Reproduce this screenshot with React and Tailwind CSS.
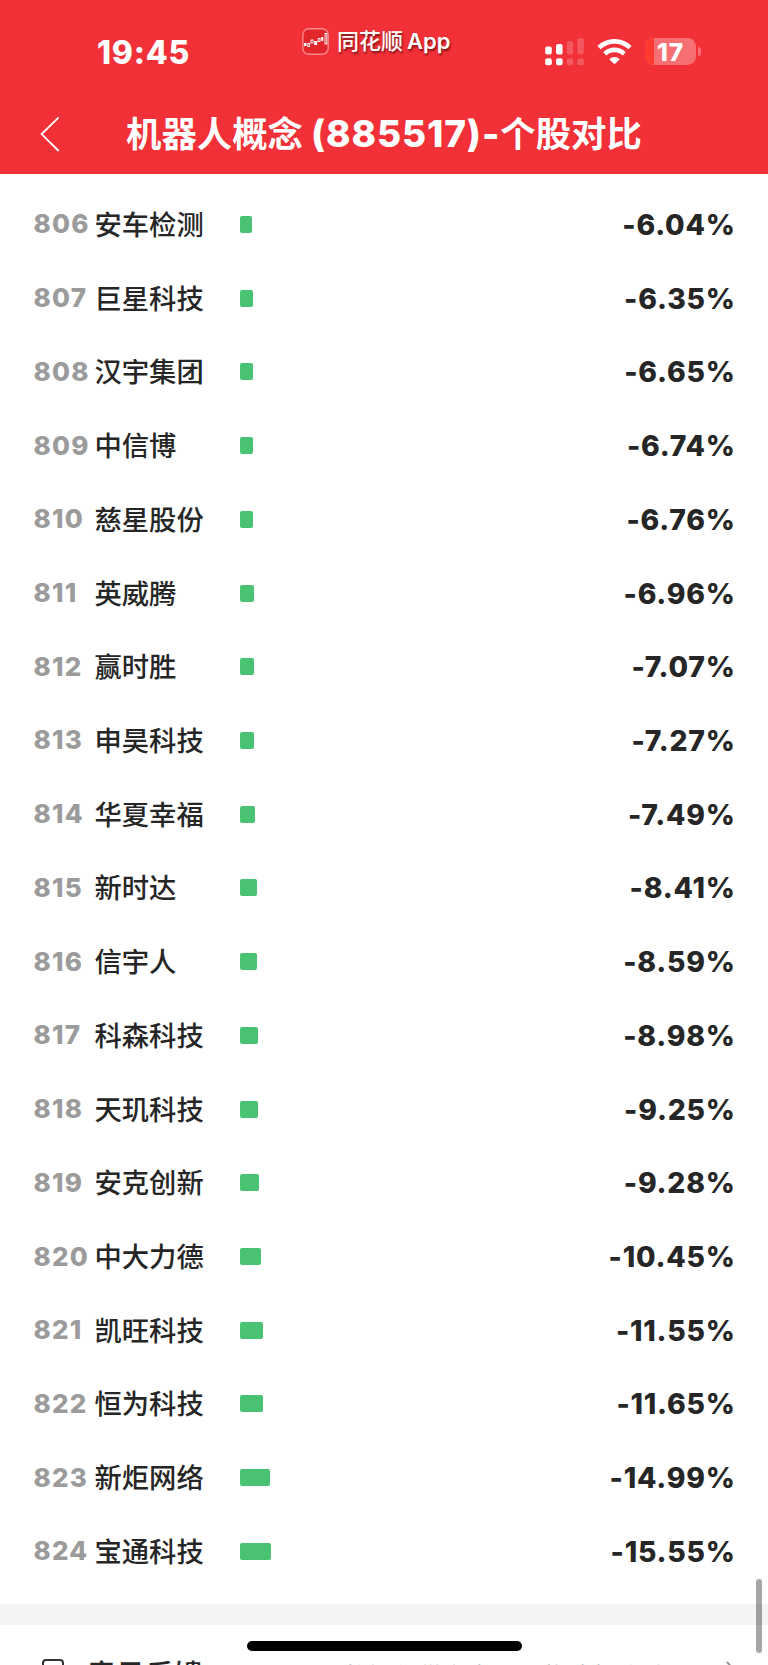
import React from "react";

const stocks = [
  { rank: 806, name: "安车检测", change: -6.04 },
  { rank: 807, name: "巨星科技", change: -6.35 },
  { rank: 808, name: "汉宇集团", change: -6.65 },
  { rank: 809, name: "中信博", change: -6.74 },
  { rank: 810, name: "慈星股份", change: -6.76 },
  { rank: 811, name: "英威腾", change: -6.96 },
  { rank: 812, name: "赢时胜", change: -7.07 },
  { rank: 813, name: "申昊科技", change: -7.27 },
  { rank: 814, name: "华夏幸福", change: -7.49 },
  { rank: 815, name: "新时达", change: -8.41 },
  { rank: 816, name: "信宇人", change: -8.59 },
  { rank: 817, name: "科森科技", change: -8.98 },
  { rank: 818, name: "天玑科技", change: -9.25 },
  { rank: 819, name: "安克创新", change: -9.28 },
  { rank: 820, name: "中大力德", change: -10.45 },
  { rank: 821, name: "凯旺科技", change: -11.55 },
  { rank: 822, name: "恒为科技", change: -11.65 },
  { rank: 823, name: "新炬网络", change: -14.99 },
  { rank: 824, name: "宝通科技", change: -15.55 },
];

// px per percent
const BAR_SCALE = 2.03;

const App = () => {
  return (
    <div className="relative flex h-[1665px] w-[768px] flex-col overflow-hidden bg-white font-['Inter','Noto_Sans_CJK_SC',sans-serif] text-[#262626]">
      <header className="h-[174.4px] shrink-0 bg-[#f23037] text-white">
        <StatusBar />
        <NavBar />
      </header>

      <main className="shrink-0 pt-[13.2px]">
        {stocks.map((stock) => (
          <StockRow key={stock.rank} {...stock} />
        ))}
      </main>

      <div className="mt-[16px] h-[21px] shrink-0 bg-[#f4f4f4]" />

      <FooterRow />

      {/* scroll indicator */}
      <div className="absolute left-[755.5px] top-[1579px] h-[74px] w-[6px] rounded-full bg-black/35" />
      {/* home indicator */}
      <div className="absolute left-[246.5px] top-[1641px] h-[9.5px] w-[275px] rounded-full bg-black" />
    </div>
  );
};

const StatusBar = () => (
  <div className="flex h-[98px] pl-[97px] pt-[26px]">
    <span className="mt-[6px] w-[205px] text-[32px] font-extrabold leading-[42px] tracking-[0.7px]">19:45</span>
    <div className="flex h-[30px] w-[242px] items-center">
      <AppIcon />
      <span className="ml-[8px] whitespace-nowrap text-[22px] font-medium leading-[30px] [text-shadow:1px_2px_2px_rgba(60,0,0,0.6)]">
        同花顺<span className="ml-[4px] font-semibold">App</span>
      </span>
    </div>
    <div className="mt-[11.5px] flex h-[28px]">
      <SignalIcon />
      <WifiIcon />
      <Battery level={17} />
    </div>
  </div>
);

const NavBar = () => (
  <div className="flex h-[72px] items-center pl-[38px]">
    <svg width="24" height="38" viewBox="0 0 24 38" fill="none" stroke="white" strokeWidth="1.8">
      <path d="M20.7 2.3L3.6 19.1L20.7 36" />
    </svg>
    <h1 className="ml-[64px] flex items-center whitespace-nowrap text-[35.4px] font-bold leading-[48px]">
      <span className="pt-[2px]">机器人概念</span>
      <span className="ml-[8px] text-[37px] font-extrabold tracking-[0.9px]">(885517)-</span>
      <span className="pt-[2px]">个股对比</span>
    </h1>
  </div>
);

const StockRow = ({ rank, name, change }) => (
  <div className="flex h-[73.72px] items-center pl-[33.5px] pr-[32.3px]">
    <span className="w-[61px] text-[26px] font-extrabold leading-[30px] tracking-[1.2px] text-[#9b9b9b]">{rank}</span>
    <span className="w-[145.2px] whitespace-nowrap pt-[3px] text-[27.3px] font-medium leading-[40px]">{name}</span>
    <span className="h-[17px] rounded-[2px] bg-[#49c273]" style={{ width: Math.abs(change) * BAR_SCALE }} />
    <span className="ml-auto pt-px text-[28.3px] font-extrabold leading-[34px] tracking-[0.8px]">{change.toFixed(2)}%</span>
  </div>
);

const FooterRow = () => (
  <div className="flex h-[40px] shrink-0 pl-[42px] pt-[31px]">
    <svg className="mt-[3px] shrink-0" width="22" height="28" viewBox="0 0 22 28" fill="none" stroke="#333" strokeWidth="2">
      <rect x="1" y="1" width="20" height="26" rx="3" />
    </svg>
    <span className="ml-[23px] whitespace-nowrap text-[29px] font-medium leading-[40px]">意见反馈</span>
    <span className="ml-auto mt-[2px] whitespace-nowrap text-[25px] leading-[38px] text-[#999]">数据仅供参考，不构成投资建议</span>
    <svg className="ml-[32px] mr-[29px] mt-[5px] shrink-0" width="14" height="24" viewBox="0 0 14 24" fill="none" stroke="#999" strokeWidth="2">
      <path d="M2 1L12 12L2 23" />
    </svg>
  </div>
);

const AppIcon = () => (
  <svg width="27" height="27" viewBox="0 0 27 27">
    <rect x="0.8" y="0.8" width="25.4" height="25.4" rx="6" fill="#e3262c" stroke="#f5898c" strokeWidth="1.4" />
    <g fill="white">
      <rect x="2" y="15" width="2.5" height="3" />
      <rect x="12.2" y="13" width="3" height="4" />
      <rect x="19.2" y="9" width="2" height="4" />
    </g>
    <g fill="none" stroke="white" strokeWidth="0.9">
      <rect x="5.8" y="15.5" width="1.8" height="3" />
      <rect x="9" y="12" width="2" height="3" />
      <rect x="16.2" y="10.5" width="1.8" height="3" />
      <rect x="23" y="5.5" width="1.8" height="10.5" />
    </g>
  </svg>
);

const SignalIcon = () => (
  <svg width="40" height="28" viewBox="0 0 40 28" fill="white">
    <rect x="1.2" y="8.5" width="6.6" height="8" rx="2" />
    <rect x="12" y="6" width="6.6" height="10.5" rx="2" />
    <rect x="22.8" y="3" width="6.4" height="13.5" rx="2" opacity="0.2" />
    <rect x="33.4" y="0.2" width="6.4" height="16.3" rx="2" opacity="0.2" />
    <rect x="1.2" y="20.2" width="6.6" height="7" rx="2" />
    <rect x="12" y="20.2" width="6.6" height="7" rx="2" />
    <rect x="22.8" y="20.2" width="6.4" height="7" rx="2" opacity="0.2" />
    <rect x="33.4" y="20.2" width="6.4" height="7" rx="2" opacity="0.2" />
  </svg>
);

const WifiIcon = () => (
  <svg className="ml-[13px]" width="35" height="28" viewBox="0 0 35 28" fill="none" stroke="white" strokeWidth="4.6">
    <path d="M2 9.6A22.3 22.3 0 0 1 33 9.6" />
    <path d="M7.8 15.8A14 14 0 0 1 27.2 15.8" />
    <path d="M12.2 21.2Q17.5 16.6 22.8 21.2L18.4 25.6Q17.5 26.4 16.6 25.6Z" fill="white" stroke="none" />
  </svg>
);

const Battery = ({ level }) => (
  <div className="ml-[13px] flex items-center">
    <div className="relative flex h-[27px] w-[51px] items-center justify-center overflow-hidden rounded-[8.5px] bg-[#f66f73]">
      <span className="absolute inset-y-0 left-0 bg-[#ff3b30]" style={{ width: `${level}%` }} />
      <span className="relative pt-px text-[24.5px] font-extrabold leading-[27px] tracking-[0.8px]">{level}</span>
    </div>
    <span className="ml-[2px] h-[9px] w-[3px] rounded-r-full bg-[#f66f73]" />
  </div>
);

export default App;
